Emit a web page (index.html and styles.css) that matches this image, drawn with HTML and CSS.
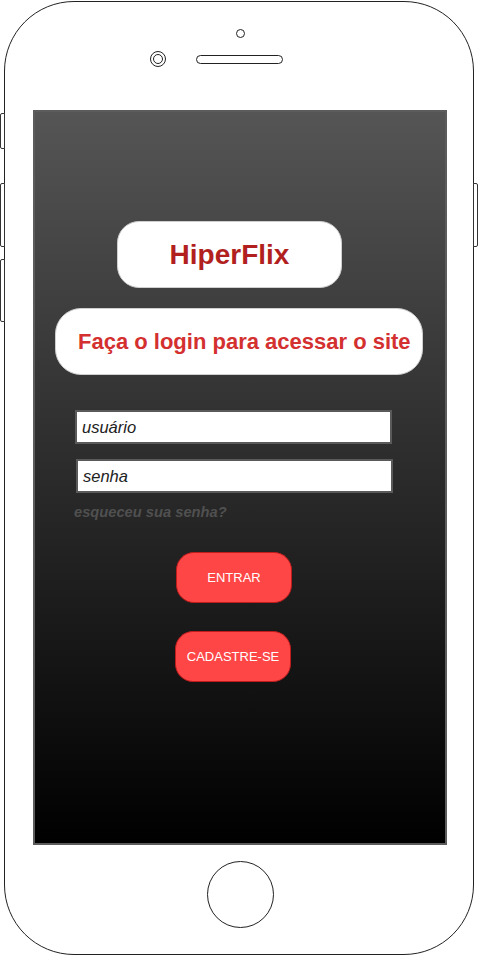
FILE: index.html
```html
<!DOCTYPE html>
<html lang="pt">
<head>
<meta charset="utf-8">
<title>HiperFlix</title>
<link rel="stylesheet" href="styles.css">
</head>
<body>
<div class="phone">
  <span class="side-btn side-left b1"></span>
  <span class="side-btn side-left b2"></span>
  <span class="side-btn side-left b3"></span>
  <span class="side-btn side-right b2"></span>
  <div class="phone-top">
    <span class="sensor"></span>
    <div class="cam-row">
      <span class="camera"><span class="lens"></span></span>
      <span class="speaker"></span>
    </div>
  </div>
  <div class="screen">
    <div class="brand">HiperFlix</div>
    <div class="subtitle">Faça o login para acessar o site</div>
    <div class="field field-user">usuário</div>
    <div class="field field-pass">senha</div>
    <div class="forgot">esqueceu sua senha?</div>
    <div class="btn btn-enter">ENTRAR</div>
    <div class="btn btn-signup">CADASTRE-SE</div>
  </div>
  <div class="home"></div>
</div>
</body>
</html>
```

FILE: styles.css
```css
html, body {
  margin: 0;
  padding: 0;
  background: #ffffff;
  font-family: "Liberation Sans", Arial, sans-serif;
}

.phone {
  position: relative;
  box-sizing: border-box;
  width: 470px;
  height: 954px;
  margin: 1px 0 0 4px;
  border: 1px solid #222;
  border-radius: 70px;
  background: #fff;
  display: flex;
  flex-direction: column;
  align-items: flex-start;
}

.side-btn {
  position: absolute;
  box-sizing: border-box;
  width: 5px;
  border: 1px solid #333;
  background: #fff;
}
.side-left { left: -5px; border-radius: 2px 0 0 2px; }
.side-right { right: -5px; border-radius: 0 2px 2px 0; }
.b1 { top: 111px; height: 36px; }
.b2 { top: 181px; height: 64px; }
.b3 { top: 257px; height: 63px; }

.phone-top {
  width: 100%;
  height: 108px;
  display: flex;
  flex-direction: column;
  align-items: center;
}

.sensor {
  box-sizing: border-box;
  width: 9px;
  height: 9px;
  margin-top: 27px;
  margin-left: 2px;
  border: 1px solid #222;
  border-radius: 50%;
}

.cam-row {
  align-self: stretch;
  margin-top: 13px;
  padding-left: 145px;
  display: flex;
  align-items: center;
  gap: 30px;
}

.camera {
  box-sizing: border-box;
  width: 16px;
  height: 16px;
  border: 1px solid #222;
  border-radius: 50%;
  display: flex;
  align-items: center;
  justify-content: center;
}
.lens {
  box-sizing: border-box;
  width: 10px;
  height: 10px;
  border: 1px solid #222;
  border-radius: 50%;
}

.speaker {
  box-sizing: border-box;
  width: 87px;
  height: 9px;
  border: 1px solid #222;
  border-radius: 5px;
}

.screen {
  box-sizing: border-box;
  width: 414px;
  height: 735px;
  margin-left: 28px;
  padding-top: 109px;
  border: 2px solid #5c5c5c;
  background: linear-gradient(to bottom, #555555, #000000);
  display: flex;
  flex-direction: column;
  align-items: flex-start;
}

.brand {
  box-sizing: border-box;
  width: 225px;
  height: 67px;
  margin-left: 82px;
  border: 1px solid #cfcfcf;
  border-radius: 22px;
  background: #fff;
  display: flex;
  align-items: center;
  justify-content: center;
  font-size: 28px;
  font-weight: bold;
  color: #b21f1f;
}

.subtitle {
  box-sizing: border-box;
  width: 368px;
  height: 67px;
  margin-top: 20px;
  margin-left: 20px;
  padding-left: 22px;
  border: 1px solid #cfcfcf;
  border-radius: 26px;
  background: #fff;
  display: flex;
  align-items: center;
  font-size: 22px;
  font-weight: bold;
  color: #d3302f;
  white-space: nowrap;
}

.field {
  box-sizing: border-box;
  width: 317px;
  height: 34px;
  padding-left: 5px;
  border: 2px solid #5a5a5a;
  background: #fff;
  display: flex;
  align-items: center;
  font-size: 16.5px;
  font-style: italic;
  color: #222;
}
.field-user { margin-top: 35px; margin-left: 40px; }
.field-pass { margin-top: 15px; margin-left: 41px; }

.forgot {
  margin-top: 10px;
  margin-left: 39px;
  line-height: 18px;
  font-size: 14.7px;
  font-weight: bold;
  font-style: italic;
  color: #505050;
}

.btn {
  box-sizing: border-box;
  width: 116px;
  height: 51px;
  border: 1px solid #c01c1c;
  border-radius: 18px;
  background: #ff4646;
  display: flex;
  align-items: center;
  justify-content: center;
  font-size: 13px;
  color: #fff;
}
.btn-enter { margin-top: 31px; margin-left: 141px; }
.btn-signup { margin-top: 28px; margin-left: 140px; }

.home {
  box-sizing: border-box;
  width: 67px;
  height: 67px;
  margin-top: 16px;
  margin-left: 202px;
  border: 1px solid #222;
  border-radius: 50%;
}
```
